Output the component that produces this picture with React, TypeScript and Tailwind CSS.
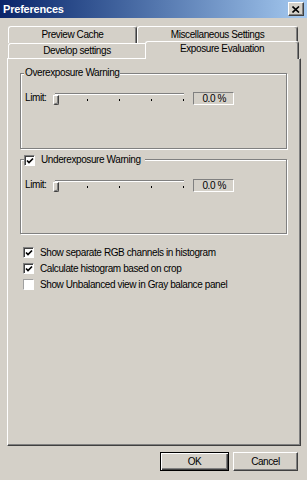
import React from "react";

function CheckBox({ checked, faint }: { checked: boolean; faint?: boolean }) {
  return (
    <span
      className={
        "relative block w-[11px] h-[11px] shrink-0 bg-white border " +
        (faint
          ? "border-t-[#a0a0a0] border-l-[#a0a0a0] border-b-white border-r-white"
          : "border-t-[#808080] border-l-[#808080] border-b-white border-r-white shadow-[inset_1px_1px_0_#404040]")
      }
    >
      {checked && (
        <svg className="absolute left-[1px] top-[1px]" width="8" height="8" viewBox="0 0 8 8">
          <path d="M1 3.5 L3 5.5 L7 1.5" stroke="#000" strokeWidth="1.7" fill="none" />
        </svg>
      )}
    </span>
  );
}

function LimitRow() {
  const ticks = [3, 35, 67, 99, 131];
  return (
    <div className="flex items-start h-[14px] pl-[4px]">
      <span className="w-[27px] leading-[14px]">Limit:</span>
      <div className="relative w-[134px] h-[14px]">
        <div className="absolute left-[3px] right-[2px] top-[2px] h-[2px] border-t border-t-[#808080] border-b border-b-white" />
        {ticks.map((x) => (
          <div key={x} className="absolute top-[8px] w-[1px] h-[2px] bg-black" style={{ left: x }} />
        ))}
        <div className="absolute left-[1px] top-[4px] w-[6px] h-[10px] bg-[#d4d0c8] border border-t-white border-l-white border-r-[#404040] border-b-[#404040] rounded-b-[2px] shadow-[inset_-1px_-1px_0_#808080]" />
      </div>
      <div className="ml-[7px] mt-[1px] w-[41px] h-[13px] border border-t-[#808080] border-l-[#808080] border-b-white border-r-white flex items-center justify-end pr-[7px] leading-[11px]">
        0.0 %
      </div>
    </div>
  );
}

export default function App() {
  return (
    <div className="w-[307px] h-[480px] bg-[#d4d0c8] text-black text-[10px] tracking-[-0.4px] font-['Liberation_Sans',Arial,sans-serif] flex flex-col overflow-hidden">
      {/* Title bar */}
      <div className="h-[18px] shrink-0 bg-gradient-to-r from-[#0a246a] to-[#a6caf0] flex items-center justify-between pl-[3px] pr-[3px]">
        <span className="text-white font-bold text-[11px] tracking-[-0.2px] leading-[18px]">Preferences</span>
        <div className="w-[16px] h-[14px] bg-[#d4d0c8] border border-t-white border-l-white border-r-[#404040] border-b-[#404040] shadow-[inset_-1px_-1px_0_#808080] flex items-center justify-center">
          <svg width="8" height="7" viewBox="0 0 8 7">
            <path d="M0.5 0.5 L7 6.5 M7 0.5 L0.5 6.5" stroke="#000" strokeWidth="1.6" fill="none" />
          </svg>
        </div>
      </div>

      {/* Tabs */}
      <div className="ml-[8px] mt-[8px] flex flex-col">
        <div className="flex h-[17px]">
          <div className="w-[129px] h-full border-l border-t border-white border-r border-r-[#404040] rounded-t-[3px] shadow-[inset_-1px_0_0_#808080] text-center leading-[14px] pt-[1px]">
            Preview Cache
          </div>
          <div className="w-[161px] h-full border-l border-t border-white border-r border-r-[#404040] rounded-t-[3px] shadow-[inset_-1px_0_0_#808080] text-center leading-[14px] pt-[1px]">
            Miscellaneous Settings
          </div>
        </div>
        <div className="flex h-[15px]">
          <div className="w-[137px] h-full bg-[#d4d0c8] border-l border-t border-white rounded-tl-[3px] text-center leading-[14px]">
            Develop settings
          </div>
          <div className="relative z-10 w-[154px] h-[18px] -mt-[2px] bg-[#d4d0c8] border-l border-t border-white border-r border-r-[#404040] rounded-t-[3px] shadow-[inset_-1px_0_0_#808080] text-center leading-[14px]">
            Exposure Evaluation
          </div>
        </div>
      </div>

      {/* Panel */}
      <div className="ml-[7px] w-[294px] h-[388px] shrink-0 border border-t-white border-l-white border-r-[#404040] border-b-[#404040] shadow-[inset_-1px_-1px_0_#808080] flex flex-col pl-[12px]">
        {/* Overexposure group */}
        <div className="relative mt-[14px] w-[267px] h-[76px] border border-[#808080] shadow-[inset_1px_1px_0_#fff,1px_1px_0_#fff] pt-[17px]">
          <span className="absolute left-[3px] -top-[7px] px-[1px] bg-[#d4d0c8] leading-[12px]">
            Overexposure Warning
          </span>
          <LimitRow />
        </div>

        {/* Underexposure group */}
        <div className="relative mt-[10px] w-[267px] h-[75px] border border-[#808080] shadow-[inset_1px_1px_0_#fff,1px_1px_0_#fff] pt-[18px]">
          <div className="absolute left-[3px] -top-[6px] h-[12px] flex items-center gap-[6px] pr-[4px] bg-[#d4d0c8]">
            <CheckBox checked />
            <span className="leading-[12px]">Underexposure Warning</span>
          </div>
          <LimitRow />
        </div>

        {/* Checkboxes */}
        <div className="mt-[10px] flex flex-col pl-[3px]">
          <div className="h-[16px] flex items-center gap-[6px]">
            <CheckBox checked />
            <span>Show separate RGB channels in histogram</span>
          </div>
          <div className="h-[16px] flex items-center gap-[6px]">
            <CheckBox checked />
            <span>Calculate histogram based on crop</span>
          </div>
          <div className="h-[16px] flex items-center gap-[6px]">
            <CheckBox checked={false} faint />
            <span>Show Unbalanced view in Gray balance panel</span>
          </div>
        </div>
      </div>

      {/* Buttons */}
      <div className="mt-[6px] flex justify-end gap-[4px] pr-[9px]">
        <div className="w-[69px] h-[19px] border border-black shadow-[inset_1px_1px_0_#fff,inset_-1px_-1px_0_#404040,inset_-2px_-2px_0_#808080] flex items-center justify-center">
          OK
        </div>
        <div className="w-[65px] h-[19px] border border-t-white border-l-white border-r-[#404040] border-b-[#404040] shadow-[inset_-1px_-1px_0_#808080] flex items-center justify-center">
          Cancel
        </div>
      </div>
    </div>
  );
}
